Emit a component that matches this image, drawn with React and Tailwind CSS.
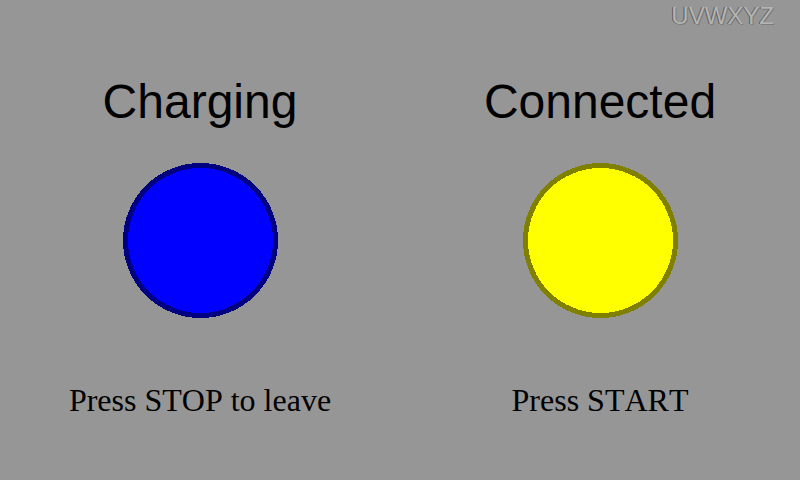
const stations = [
  { title: "Charging", hint: "Press STOP to leave", fill: "#0000ff", ring: "#000080" },
  { title: "Connected", hint: "Press START", fill: "#ffff00", ring: "#808000" },
];

function Lamp({ label, fill, ring }) {
  return (
    <svg
      role="img"
      aria-label={label}
      viewBox="0 0 155 155"
      className="size-[155px]"
      shapeRendering="crispEdges"
    >
      <circle cx="77.5" cy="77.5" r="77.5" fill={ring} />
      <circle cx="77.5" cy="77.5" r="72.5" fill={fill} />
    </svg>
  );
}

function Station({ title, hint, fill, ring }) {
  return (
    <section className="flex flex-col items-center text-center text-black">
      <h2 className="font-['Liberation_Sans',Arial,sans-serif] text-5xl leading-12">{title}</h2>
      <div className="pt-[37px] pb-[66px]">
        <Lamp label={title} fill={fill} ring={ring} />
      </div>
      <p className="font-['Liberation_Serif','Times_New_Roman',serif] text-[32px] leading-8">{hint}</p>
    </section>
  );
}

export default function App() {
  return (
    <div className="min-h-screen bg-[#969696] [font-kerning:none]">
      <header className="flex justify-end pt-1 pr-[26px]">
        <span className="font-['Liberation_Sans',Arial,sans-serif] text-2xl leading-6 text-[#b4b4b4] [text-shadow:-1px_0_0_#5c5c5c,1px_1px_0_#7c7c7c]">
          UVWXYZ
        </span>
      </header>
      <main className="grid grid-cols-2 pt-[50px]">
        {stations.map((station) => (
          <Station key={station.title} {...station} />
        ))}
      </main>
    </div>
  );
}
